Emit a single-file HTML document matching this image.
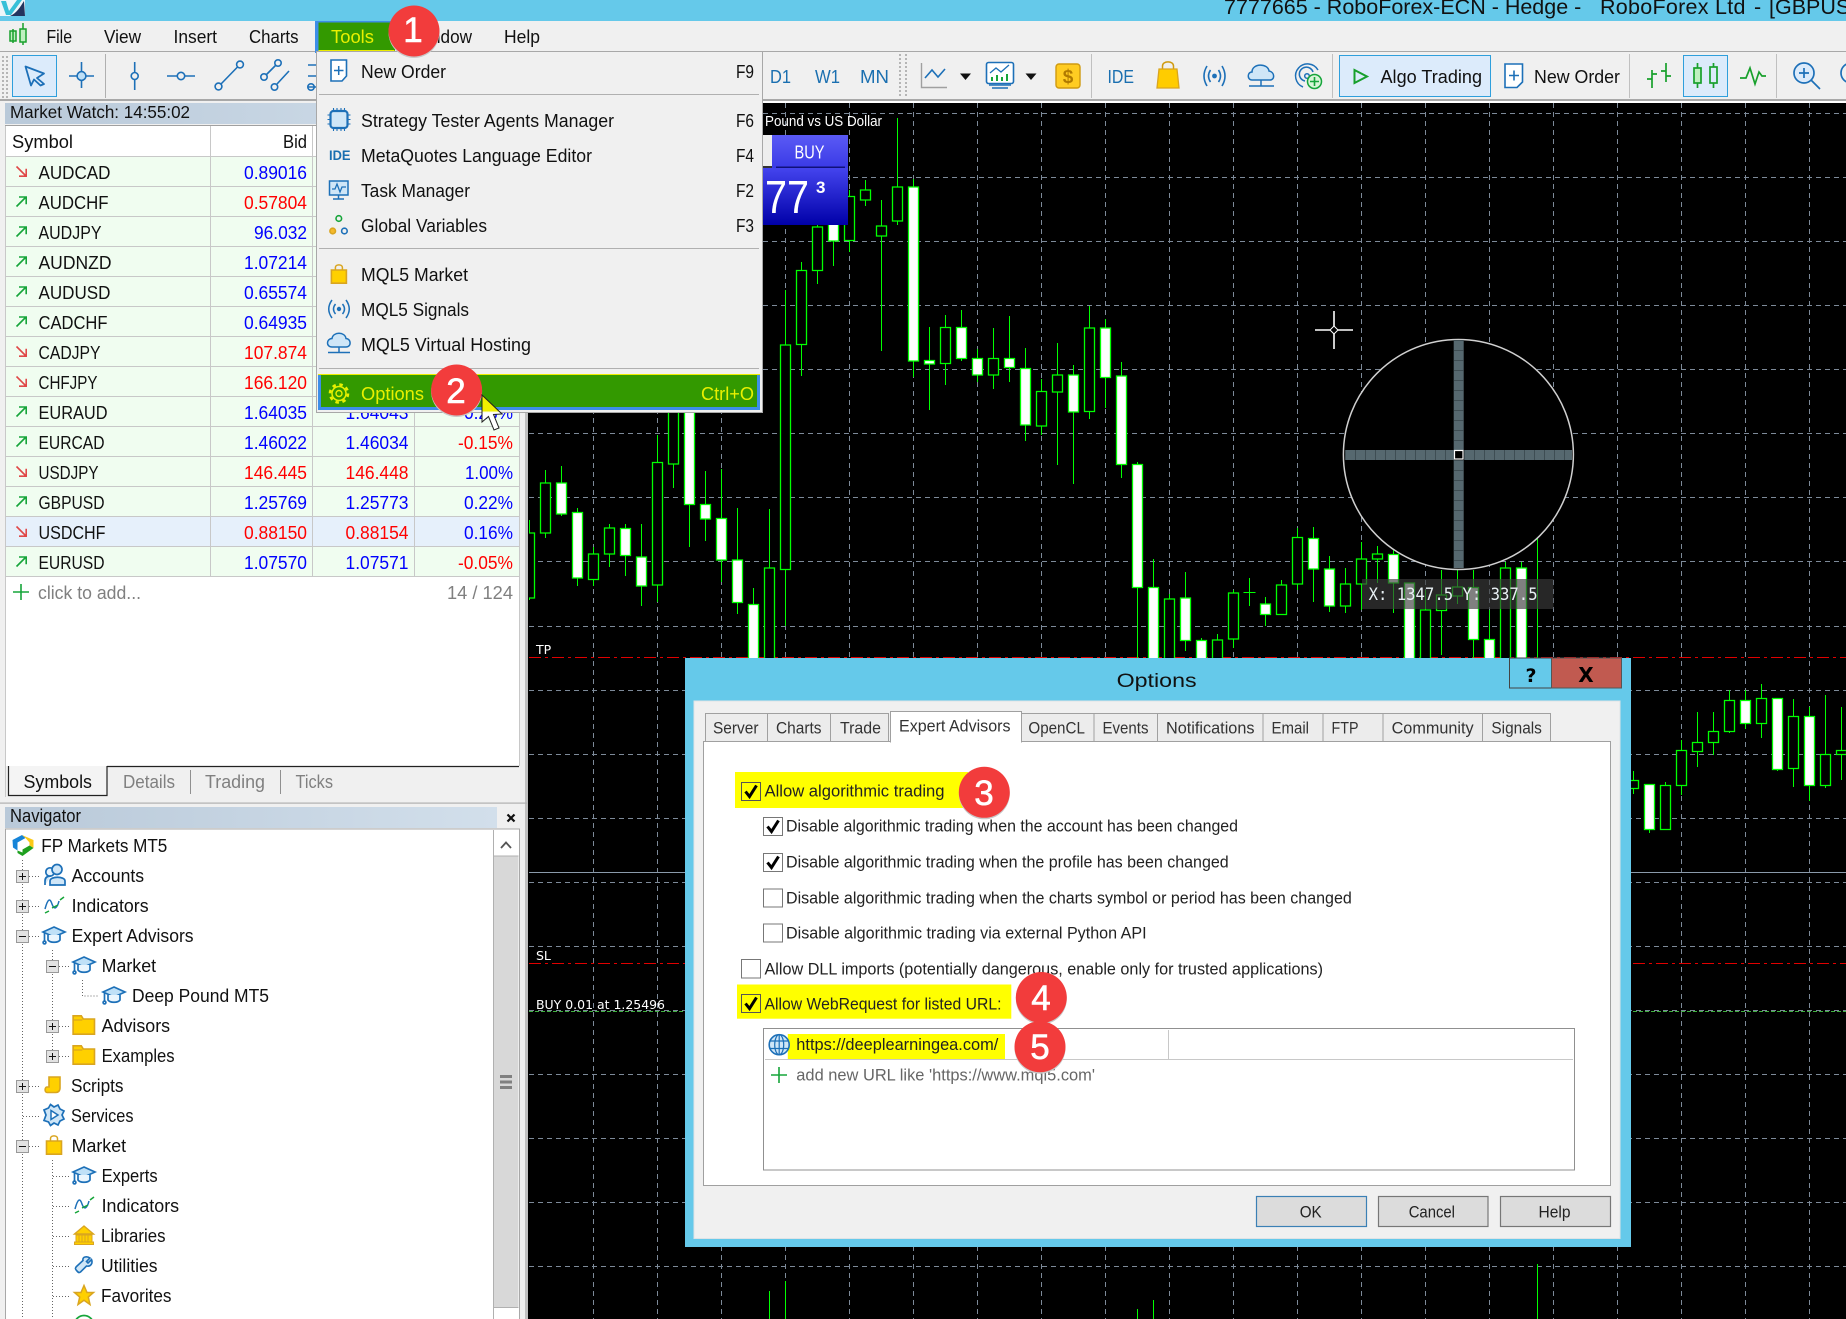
<!DOCTYPE html>
<html lang="en"><head><meta charset="utf-8"><title>MetaTrader 5 Options</title>
<style>
html,body{margin:0;padding:0;background:#000;width:1846px;height:1319px;overflow:hidden}
svg{display:block}
text{font-family:"Liberation Sans",sans-serif;fill:#111;font-size:18.5px;white-space:pre}
.g{fill:#808080}.b{fill:#0000ff}.r{fill:#ff0000}.h{fill:#1a6fb0}
.d{font-size:16.5px;fill:#222}.tb{font-size:16.5px;fill:#333}
.y{fill:#e8f000}
.w{fill:#fff}
.n{font-size:35px;fill:#fff;stroke:#fff;stroke-width:.6;text-anchor:middle}
</style></head><body>
<svg xmlns="http://www.w3.org/2000/svg" width="1846" height="1319" viewBox="0 0 1846 1319">
<defs>
<clipPath id="cc"><rect x="529" y="103" width="1317" height="1216"/></clipPath>
<clipPath id="tc"><rect x="0" y="0" width="1846" height="21"/></clipPath>
<linearGradient id="hd" x1="0" x2="1" y1="0" y2="0"><stop offset="0" stop-color="#b9c9d9"/><stop offset="1" stop-color="#d2dfeb"/></linearGradient>
<linearGradient id="bu" x1="0" x2="0" y1="0" y2="1"><stop offset="0" stop-color="#5a5af5"/><stop offset="1" stop-color="#3a3ae6"/></linearGradient>
<linearGradient id="bd" x1="0" x2="0" y1="0" y2="1"><stop offset="0" stop-color="#4444ee"/><stop offset="1" stop-color="#0000a8"/></linearGradient>
<linearGradient id="cu" x1="0" x2="0" y1="0" y2="1"><stop offset=".45" stop-color="#f0f000"/><stop offset=".5" stop-color="#fff"/></linearGradient>
<g id="up"><path d="M1 10.5L10.5 1M3.5 1H10.7V8.2" fill="none" stroke="#16a53a" stroke-width="1.6"/></g>
<g id="dn"><path d="M1 .5L10.5 10M10.7 2.8V10.2H3.5" fill="none" stroke="#e04848" stroke-width="1.6"/></g>
<g id="cap" fill="none" stroke="#1d70b8" stroke-width="1.7"><path d="M12 1L23 6L12 11L1 6Z" fill="#bfe0f7"/><path d="M6 9V14C8 17 16 17 18 14V9" fill="#eaf5fd"/><path d="M2.5 7V15"/><circle cx="2.5" cy="16.5" r="1.4"/></g>
<g id="fol"><path d="M.8 19.2V.8H9L11 4H22.2V19.2Z" fill="#ffd000" stroke="#d9a520" stroke-width="1.6"/><path d="M1 5H10" stroke="#d9a520" stroke-width="1.2"/></g>
<g id="bag"><path d="M5 6V3.5C5 0 12 0 12 3.5V6" fill="none" stroke="#d9a520" stroke-width="1.5"/><path d="M1 6H16V19.2H1Z" fill="#ffd000" stroke="#d9a520" stroke-width="1.6"/></g>
<g id="ind" fill="none" stroke-width="1.5"><path d="M1 13C4 2 6 2 8 8S13 13 15 5" stroke="#1d70b8"/><path d="M1 17L5 15M8 12L14 9M16 4L20 1" stroke="#16a53a"/></g>
<g id="pl"><rect x=".5" y=".5" width="12" height="12" fill="#e2e2e2" stroke="#999"/><path d="M3 6.5H10M6.5 3V10" stroke="#111"/></g>
<g id="mi"><rect x=".5" y=".5" width="12" height="12" fill="#e2e2e2" stroke="#999"/><path d="M3 6.5H10" stroke="#111"/></g>
<g id="ck"><path d="M4 9L8 14L15 3" fill="none" stroke="#000" stroke-width="3"/></g>
</defs>

<!-- chart -->
<rect x="0" y="0" width="1846" height="1319" fill="#000"/>
<g clip-path="url(#cc)">
<path fill="none" stroke="#7d8a99" stroke-dasharray="5 4" d="M529 113.5H1846M529 177.5H1846M529 241.5H1846M529 305.5H1846M529 369.5H1846M529 433.5H1846M529 497.5H1846M529 561.5H1846M529 626.5H1846M529 690.5H1846M529 754.5H1846M529 818.5H1846M529 882.5H1846M529 946.5H1846M529 1010.5H1846M529 1074.5H1846M529 1138.5H1846M529 1202.5H1846M529 1266.5H1846"/>
<path fill="none" stroke="#7d8a99" stroke-dasharray="5 4" d="M593.5 103V1319M657.5 103V1319M721.5 103V1319M785.5 103V1319M849.5 103V1319M913.5 103V1319M977.5 103V1319M1041.5 103V1319M1105.5 103V1319M1169.5 103V1319M1233.5 103V1319M1297.5 103V1319M1361.5 103V1319M1425.5 103V1319M1489.5 103V1319M1553.5 103V1319M1617.5 103V1319M1681.5 103V1319M1745.5 103V1319M1809.5 103V1319"/>
<path fill="none" stroke="#8a9aaa" d="M529 872.5H1846"/>
<path fill="none" stroke="#e00000" stroke-dasharray="12 4 3 4" d="M529 657.5H1846M529 963.5H1846"/>
<path fill="none" stroke="#3faf3f" stroke-dasharray="4 2" d="M529 1011.5H1846"/>
<!-- wicks -->
<path fill="none" stroke="#00ff00" d="M529.5 520V600M545.5 470V538M561.5 466V516M577.5 508V586M593.5 547V586M609.5 524V567M625.5 524V576M641.5 524V606M657.5 435V602M673.5 400V488M689.5 400V547M705.5 471V541M721.5 469V582M737.5 508V614M753.5 588V660M769.5 509V660M785.5 290V626M801.5 262V376M817.5 220V284M833.5 220V266M849.5 190V252M865.5 180V206M881.5 200V351M897.5 118V225M913.5 179V377M929.5 327V410M945.5 315V385M961.5 310V361M977.5 349V382M993.5 328V389M1009.5 316V382M1025.5 348V441M1041.5 379V435M1057.5 343V465M1073.5 365V484M1089.5 306V419M1105.5 319V408M1121.5 362V478M1137.5 462V660M1153.5 559V660M1169.5 594V660M1185.5 572V651M1201.5 638V660M1217.5 634V660M1233.5 590V648M1249.5 578V606M1243.5 592.5H1255.5M1265.5 597V626M1281.5 580V615M1297.5 528V590M1313.5 527V602M1329.5 556V612M1345.5 568V613M1361.5 542V610M1377.5 546V583M1393.5 550V613M1409.5 583V660M1425.5 590V660M1441.5 570V655M1457.5 570V604M1473.5 570V660M1489.5 610V660M1505.5 562V660M1521.5 562V660M1537.5 538V660M769.5 1291V1319M785.5 1281V1319M1137.5 1309V1319M1153.5 1300V1319M1537.5 1264V1319M1633.5 771V794M1649.5 784V833M1665.5 782V829M1681.5 740V795M1697.5 712V767M1713.5 712V755M1729.5 690V733M1745.5 690V729M1761.5 684V738M1777.5 698V771M1793.5 699V787M1809.5 707V801M1825.5 695V788M1841.5 707V780"/>
<!-- hollow bodies -->
<path fill="#000" stroke="#00ff00" stroke-width="1.3" d="M524.5 533H534.5V598H524.5zM540.5 483H550.5V533H540.5zM588.5 554H598.5V579.5H588.5zM604.5 528H614.5V554H604.5zM652.5 462.5H662.5V585H652.5zM668.5 400H678.5V464H668.5zM764.5 568H774.5V660H764.5zM780.5 345H790.5V569.5H780.5zM796.5 270.5H806.5V344.5H796.5zM812.5 227H822.5V270.5H812.5zM844.5 196.5H854.5V240.5H844.5zM860.5 190H870.5V200H860.5zM876.5 226H886.5V236H876.5zM892.5 187H902.5V221H892.5zM940.5 327.5H950.5V363.5H940.5zM988.5 358.5H998.5V375H988.5zM1036.5 391.5H1046.5V426H1036.5zM1052.5 375H1062.5V392H1052.5zM1084.5 328H1094.5V411.5H1084.5zM1164.5 599H1174.5V660H1164.5zM1212.5 640H1222.5V660H1212.5zM1228.5 593H1238.5V639H1228.5zM1276.5 585H1286.5V614.5H1276.5zM1292.5 537.5H1302.5V584H1292.5zM1340.5 584H1350.5V606H1340.5zM1356.5 559H1366.5V584H1356.5zM1372.5 554H1382.5V559H1372.5zM1420.5 610H1430.5V660H1420.5zM1436.5 595H1446.5V610.5H1436.5zM1452.5 587H1462.5V596H1452.5zM1500.5 568H1510.5V660H1500.5zM1628.5 780.5H1638.5V788.5H1628.5zM1660.5 785.5H1670.5V829.5H1660.5zM1676.5 750.5H1686.5V785.5H1676.5zM1692.5 742.5H1702.5V751.5H1692.5zM1708.5 731.5H1718.5V742.5H1708.5zM1724.5 700.5H1734.5V731.5H1724.5zM1756.5 698.5H1766.5V723.5H1756.5zM1788.5 716.5H1798.5V768.5H1788.5zM1820.5 754.5H1830.5V785.5H1820.5zM1836.5 750.5H1846.5V754.5H1836.5z"/>
<!-- white bodies -->
<path fill="#fff" stroke="#00ff00" stroke-width="1.3" d="M556.5 483H566.5V514H556.5zM572.5 512.5H582.5V578H572.5zM620.5 528.5H630.5V555.5H620.5zM636.5 557H646.5V586H636.5zM684.5 400H694.5V504.5H684.5zM700.5 504.5H710.5V519H700.5zM716.5 518.5H726.5V560H716.5zM732.5 560H742.5V602.5H732.5zM748.5 604.5H758.5V660H748.5zM828.5 200H838.5V241H828.5zM908.5 187H918.5V361H908.5zM924.5 360.5H934.5V364H924.5zM956.5 327.5H966.5V358.5H956.5zM972.5 358.5H982.5V375H972.5zM1004.5 358.5H1014.5V367.5H1004.5zM1020.5 368.5H1030.5V425H1020.5zM1068.5 375H1078.5V412H1068.5zM1100.5 328H1110.5V377.5H1100.5zM1116.5 376H1126.5V464.5H1116.5zM1132.5 464.5H1142.5V587.5H1132.5zM1148.5 587.5H1158.5V660H1148.5zM1180.5 598H1190.5V640.5H1180.5zM1196.5 640.5H1206.5V660H1196.5zM1260.5 604H1270.5V614.5H1260.5zM1308.5 538.5H1318.5V569H1308.5zM1324.5 569H1334.5V606H1324.5zM1388.5 554.5H1398.5V583H1388.5zM1404.5 583H1414.5V660H1404.5zM1468.5 587.5H1478.5V639.5H1468.5zM1484.5 639.5H1494.5V660H1484.5zM1516.5 568H1526.5V660H1516.5zM1644.5 784.5H1654.5V829.5H1644.5zM1740.5 700.5H1750.5V723.5H1740.5zM1772.5 698.5H1782.5V769.5H1772.5zM1804.5 716.5H1814.5V785.5H1804.5z"/>
</g>
<rect x="529" y="101" width="1317" height="2" fill="#fff"/>
<text class="w" x="765" y="126" style="font-size:14.5px" textLength="117" lengthAdjust="spacingAndGlyphs">Pound vs US Dollar</text>
<text class="w" x="536" y="654" style="font-family:'DejaVu Sans',sans-serif;font-size:12.5px">TP</text>
<text class="w" x="536" y="960" style="font-family:'DejaVu Sans',sans-serif;font-size:12.5px">SL</text>
<text class="w" x="536" y="1009" style="font-family:'DejaVu Sans',sans-serif;font-size:12.5px" textLength="129" lengthAdjust="spacingAndGlyphs">BUY 0.01 at 1.25496</text>
<!-- buy panel -->
<rect x="763" y="135" width="9" height="32" fill="#eee"/><rect x="763" y="166" width="9" height="2" fill="#333"/>
<rect x="772" y="135" width="76" height="33" fill="url(#bu)"/>
<rect x="763" y="168" width="85" height="57" fill="url(#bd)"/>
<rect x="776" y="166.5" width="69" height="1.5" fill="#10107a"/>
<text class="w" x="794.5" y="158.5" textLength="30" lengthAdjust="spacingAndGlyphs">BUY</text>
<text class="w" x="765" y="213" style="font-size:46px" textLength="44" lengthAdjust="spacingAndGlyphs">77</text>
<text class="w" x="816" y="193" style="font-size:17px;font-weight:bold">3</text>
<!-- small crosshair -->
<path d="M1315 330H1330M1338 330H1353M1334 311V326M1334 334V349" stroke="#fff" stroke-width="1.6" fill="none"/>
<path d="M1334 326L1338 330L1334 334L1330 330Z" fill="#000" stroke="#fff"/>
<!-- loupe -->
<circle cx="1458.4" cy="454.5" r="115" fill="#000" stroke="#d0d0d0" stroke-width="1.5"/>
<path d="M1458.7 340V450M1458.7 460V568" stroke="#56686f" stroke-width="10" fill="none"/>
<path d="M1345 455H1454M1464 455H1572" stroke="#56686f" stroke-width="10" fill="none"/>
<path d="M1458.7 340V450M1458.7 460V568" stroke="#3e4d53" stroke-width="10" stroke-dasharray="1 9" fill="none"/>
<path d="M1345 455H1454M1464 455H1572" stroke="#3e4d53" stroke-width="10" stroke-dasharray="1 9" fill="none"/>
<rect x="1454.5" y="450.5" width="8.5" height="8.5" fill="#000" stroke="#fff" stroke-width="1.2"/>
<rect x="1362" y="579" width="191.5" height="30" fill="#3c3c3c" fill-opacity=".65"/>
<text x="1368.6" y="600" style="font-family:'DejaVu Sans Mono',monospace;font-size:17px;fill:#e8f0f4" textLength="169" lengthAdjust="spacingAndGlyphs">X: 1347.5 Y: 337.5</text>

<!-- title bar -->
<rect x="0" y="0" width="1846" height="21" fill="#65c9ea"/>
<g clip-path="url(#tc)"><text x="1224" y="14" style="font-size:21.5px">7777665 - RoboForex-ECN - Hedge -</text><text x="1600" y="14" style="font-size:21.5px" textLength="145.5" lengthAdjust="spacing">RoboForex Ltd</text><text x="1754" y="14" style="font-size:21.5px">-</text><text x="1769" y="14" style="font-size:21.5px">[GBPUSD,H1]</text></g>
<rect x="0" y="0" width="25" height="16" fill="#eef6f9"/>
<path d="M1 1L6 15H11L22 0H17L9 11L6 1Z" fill="#37c0d8"/><path d="M10 16C17 13 20 7 24 1L25 16Z" fill="#24345e"/>

<!-- menu bar + toolbar -->
<rect x="0" y="21" width="1846" height="80" fill="#f0f0f0"/>
<rect x="0" y="51" width="1846" height="1" fill="#a8a8a8"/>
<rect x="0" y="99" width="1846" height="2" fill="#a8a8a8"/>
<g fill="none" stroke="#18a02c" stroke-width="1.5"><rect x="10" y="31" width="6" height="10" fill="#bff0c0"/><path d="M13 29V43M23 23V45"/><rect x="20" y="29" width="6" height="13" fill="#bff0c0"/></g>
<text x="46.5" y="43" textLength="25.5" lengthAdjust="spacingAndGlyphs">File</text>
<text x="104" y="43" textLength="37" lengthAdjust="spacingAndGlyphs">View</text>
<text x="173.5" y="43" textLength="43.5" lengthAdjust="spacingAndGlyphs">Insert</text>
<text x="249" y="43" textLength="49.5" lengthAdjust="spacingAndGlyphs">Charts</text>
<text x="411" y="43" textLength="61" lengthAdjust="spacingAndGlyphs">Window</text>
<text x="504" y="43" textLength="36" lengthAdjust="spacingAndGlyphs">Help</text>

<!-- left toolbar -->
<path d="M3 56V98M7 56V98" stroke="#b5b5b5" stroke-width="2" stroke-dasharray="2 2" fill="none"/>
<rect x="12.5" y="55.5" width="44" height="41" fill="#dcebfb" stroke="#2f9fdc"/>
<path d="M25.5 66.5L44 73.5L37 78L44 84L40.5 85.5L34 79.5L31 85.5Z" fill="none" stroke="#1d70b8" stroke-width="1.8" stroke-linejoin="round"/>
<g fill="none" stroke="#1d70b8" stroke-width="1.6"><path d="M69 76H77M86 76H94M81.5 62V71M81.5 81V88"/><circle cx="81.5" cy="76" r="4.4" fill="#bfe0f7"/>
<path d="M105.5 54V98" stroke="#b0b0b0" stroke-width="1"/>
<path d="M134.7 62V72M134.7 80V90"/><circle cx="134.7" cy="76" r="3.5"/>
<path d="M167 76H177M185 76H195"/><circle cx="181" cy="76" r="3.7"/>
<path d="M221 84L237.5 67"/><circle cx="218.5" cy="86.5" r="3.4"/><circle cx="240" cy="64.5" r="3.4"/>
<path d="M266 75L276 65M277 84L289 71"/><circle cx="264" cy="77" r="3.2"/><circle cx="278" cy="63" r="3.2"/><circle cx="274.5" cy="87" r="3.2"/>
<path d="M308 65H316M308 76H316M308 87H316"/><circle cx="311" cy="87" r="3.2"/></g>

<!-- right toolbar -->
<path d="M900 54V98M906 54V98" stroke="#b5b5b5" stroke-width="2" stroke-dasharray="2 2" fill="none"/>
<text class="h" x="770" y="83" textLength="21" lengthAdjust="spacingAndGlyphs">D1</text>
<text class="h" x="815" y="83" textLength="25" lengthAdjust="spacingAndGlyphs">W1</text>
<text class="h" x="860" y="83" textLength="29" lengthAdjust="spacingAndGlyphs">MN</text>
<path d="M921.5 63V87.5H947" fill="none" stroke="#a0a0a0" stroke-width="1.4"/>
<path d="M925 78L932 70L938 77L945 69" fill="none" stroke="#1d70b8" stroke-width="1.6"/>
<path d="M960 73.5H971L965.5 80Z" fill="#111"/>
<rect x="986.5" y="62.5" width="27" height="21" rx="2" fill="#fff" stroke="#1d70b8" stroke-width="1.6"/>
<path d="M989 85H1011M992 88H1008" stroke="#1d70b8" stroke-width="1.4"/>
<path d="M990 73L996 68L1001 72L1009 65" fill="none" stroke="#1d70b8" stroke-width="1.3"/>
<path d="M992 81V77M997 81V75M1002 81V77M1007 81V74" stroke="#16a53a" stroke-width="2"/>
<path d="M1025.5 73.5H1036.5L1031 80Z" fill="#111"/>
<rect x="1056" y="64" width="24" height="24" rx="3" fill="#ffcc22" stroke="#cf9a10" stroke-width="1.4"/>
<text x="1068" y="83" style="font-size:19px;font-weight:bold;fill:#b07a00;text-anchor:middle">$</text>
<path d="M1091.5 54V98M1332.5 54V98M1629.5 54V98M1776.5 54V98" stroke="#c0c0c0"/>
<text class="h" x="1107.5" y="83" textLength="26.5" lengthAdjust="spacingAndGlyphs">IDE</text>
<path d="M1162.5 69V66C1162.5 60.5 1173.5 60.5 1173.5 66V69" fill="none" stroke="#cf9a10" stroke-width="1.5"/>
<path d="M1159 69H1177L1179 88H1157Z" fill="#ffcc00" stroke="#d9a520" stroke-width="1.3"/>
<g fill="none" stroke="#1d70b8" stroke-width="1.6"><path d="M1207 66Q1201 76 1207 86M1222 66Q1228 76 1222 86M1210.5 70Q1206.5 76 1210.5 82M1218.5 70Q1222.5 76 1218.5 82"/></g><circle cx="1214.5" cy="76" r="2.4" fill="#1d70b8"/>
<path d="M1252 80C1247 80 1247 72 1252 72C1252 63 1268 63 1269 71C1275 72 1275 80 1270 80Z" fill="#cfe6f7" stroke="#1d70b8" stroke-width="1.5"/>
<path d="M1261 80V86M1249 86H1274" stroke="#1d70b8" stroke-width="1.5"/>
<g fill="none" stroke="#1d70b8" stroke-width="1.5"><path d="M1303 87A12 12 0 1 1 1318 70"/><path d="M1305 81A7 7 0 1 1 1313 72"/><circle cx="1307" cy="76" r="2.3"/></g>
<circle cx="1314.5" cy="81.5" r="7" fill="#d8f5d8" stroke="#16a53a" stroke-width="1.5"/><path d="M1310 81.5H1319M1314.5 77V86" stroke="#16a53a" stroke-width="1.6"/>
<rect x="1339.5" y="55.5" width="151" height="41" fill="#dcebfb" stroke="#2f9fdc"/>
<path d="M1354.5 70L1367 76.5L1354.5 83Z" fill="none" stroke="#18a02c" stroke-width="2"/>
<text x="1380.5" y="83" textLength="101.5" lengthAdjust="spacingAndGlyphs">Algo Trading</text>
<path d="M1505 64H1522.5V82L1517 87.5H1505Z" fill="#fff" stroke="#1d70b8" stroke-width="1.6"/><path d="M1509 75.5H1519M1514 70.5V80.5" stroke="#1d70b8" stroke-width="1.6"/>
<text x="1534" y="83" textLength="86" lengthAdjust="spacingAndGlyphs">New Order</text>
<path d="M1652 70V88M1647 79H1652M1652 74H1657M1666 63V82M1661 71H1666M1666 76H1671" stroke="#18a02c" stroke-width="1.7" fill="none"/>
<rect x="1683.5" y="55.5" width="44" height="41" fill="#dcebfb" stroke="#2f9fdc"/>
<g stroke="#18a02c" stroke-width="1.7" fill="none"><path d="M1697.5 63V88M1713.5 63V88"/><rect x="1694" y="68" width="7" height="15" fill="#bff0c0"/><rect x="1710" y="67" width="7" height="16" fill="#dcebfb"/></g>
<path d="M1740 78L1746 78L1750 68L1755 84L1759 72L1762 76L1766 76" fill="none" stroke="#18a02c" stroke-width="1.7"/>
<g fill="none" stroke="#1d70b8" stroke-width="1.7"><circle cx="1804" cy="73" r="10" fill="#dcebfb"/><path d="M1811 80L1820 89M1799 73H1809M1804 68V78"/><circle cx="1851" cy="73" r="10"/></g>

<!-- left panel -->
<rect x="0" y="101" width="527" height="1218" fill="#f0f0f0"/>
<rect x="525" y="101" width="3" height="1218" fill="#c0c0c0"/>
<rect x="5" y="103" width="514" height="21" fill="url(#hd)"/>
<text x="10" y="118" style="font-size:17.5px" textLength="180" lengthAdjust="spacingAndGlyphs">Market Watch: 14:55:02</text>
<rect x="5" y="125" width="514" height="1" fill="#a0a0a0"/>
<rect x="5.5" y="126" width="514" height="640" fill="#fff"/>
<text x="12" y="148" textLength="61" lengthAdjust="spacingAndGlyphs">Symbol</text>
<text x="307" y="148" text-anchor="end" textLength="24" lengthAdjust="spacingAndGlyphs">Bid</text>
<!-- rows -->
<rect x="5.5" y="156" width="514" height="420" fill="#f0fdf0"/>
<rect x="5.5" y="516" width="514" height="30" fill="#e6f0fb"/>
<path fill="none" stroke="#c8c8c8" d="M5.5 156.5H519.5M5.5 186.5H519.5M5.5 216.5H519.5M5.5 246.5H519.5M5.5 276.5H519.5M5.5 306.5H519.5M5.5 336.5H519.5M5.5 366.5H519.5M5.5 396.5H519.5M5.5 426.5H519.5M5.5 456.5H519.5M5.5 486.5H519.5M5.5 516.5H519.5M5.5 546.5H519.5M5.5 576.5H519.5M210.5 126V576M312.5 126V576M414.5 156V576M5.5 126V797M519.5 126V766"/>
<use href="#dn" x="15.5" y="166"/><text x="38.5" y="179" textLength="72" lengthAdjust="spacingAndGlyphs">AUDCAD</text><text class="b" x="307" y="179" text-anchor="end" textLength="63" lengthAdjust="spacingAndGlyphs">0.89016</text>
<use href="#up" x="15.5" y="196"/><text x="38.5" y="209" textLength="70" lengthAdjust="spacingAndGlyphs">AUDCHF</text><text class="r" x="307" y="209" text-anchor="end" textLength="63" lengthAdjust="spacingAndGlyphs">0.57804</text>
<use href="#up" x="15.5" y="226"/><text x="38.5" y="239" textLength="63" lengthAdjust="spacingAndGlyphs">AUDJPY</text><text class="b" x="307" y="239" text-anchor="end" textLength="53" lengthAdjust="spacingAndGlyphs">96.032</text>
<use href="#up" x="15.5" y="256"/><text x="38.5" y="269" textLength="73" lengthAdjust="spacingAndGlyphs">AUDNZD</text><text class="b" x="307" y="269" text-anchor="end" textLength="63" lengthAdjust="spacingAndGlyphs">1.07214</text>
<use href="#up" x="15.5" y="286"/><text x="38.5" y="299" textLength="72" lengthAdjust="spacingAndGlyphs">AUDUSD</text><text class="b" x="307" y="299" text-anchor="end" textLength="63" lengthAdjust="spacingAndGlyphs">0.65574</text>
<use href="#up" x="15.5" y="316"/><text x="38.5" y="329" textLength="69" lengthAdjust="spacingAndGlyphs">CADCHF</text><text class="b" x="307" y="329" text-anchor="end" textLength="63" lengthAdjust="spacingAndGlyphs">0.64935</text>
<use href="#dn" x="15.5" y="346"/><text x="38.5" y="359" textLength="62" lengthAdjust="spacingAndGlyphs">CADJPY</text><text class="r" x="307" y="359" text-anchor="end" textLength="63" lengthAdjust="spacingAndGlyphs">107.874</text>
<use href="#dn" x="15.5" y="376"/><text x="38.5" y="389" textLength="59" lengthAdjust="spacingAndGlyphs">CHFJPY</text><text class="r" x="307" y="389" text-anchor="end" textLength="63" lengthAdjust="spacingAndGlyphs">166.120</text>
<use href="#up" x="15.5" y="406"/><text x="38.5" y="419" textLength="69" lengthAdjust="spacingAndGlyphs">EURAUD</text><text class="b" x="307" y="419" text-anchor="end" textLength="63" lengthAdjust="spacingAndGlyphs">1.64035</text><text class="b" x="408.5" y="419" text-anchor="end" textLength="63" lengthAdjust="spacingAndGlyphs">1.64043</text><text class="b" x="513" y="419" text-anchor="end" textLength="49" lengthAdjust="spacingAndGlyphs">0.23%</text>
<use href="#up" x="15.5" y="436"/><text x="38.5" y="449" textLength="66" lengthAdjust="spacingAndGlyphs">EURCAD</text><text class="b" x="307" y="449" text-anchor="end" textLength="63" lengthAdjust="spacingAndGlyphs">1.46022</text><text class="b" x="408.5" y="449" text-anchor="end" textLength="63" lengthAdjust="spacingAndGlyphs">1.46034</text><text class="r" x="513" y="449" text-anchor="end" textLength="55" lengthAdjust="spacingAndGlyphs">-0.15%</text>
<use href="#dn" x="15.5" y="466"/><text x="38.5" y="479" textLength="60" lengthAdjust="spacingAndGlyphs">USDJPY</text><text class="r" x="307" y="479" text-anchor="end" textLength="63" lengthAdjust="spacingAndGlyphs">146.445</text><text class="r" x="408.5" y="479" text-anchor="end" textLength="63" lengthAdjust="spacingAndGlyphs">146.448</text><text class="b" x="513" y="479" text-anchor="end" textLength="48" lengthAdjust="spacingAndGlyphs">1.00%</text>
<use href="#up" x="15.5" y="496"/><text x="38.5" y="509" textLength="66" lengthAdjust="spacingAndGlyphs">GBPUSD</text><text class="b" x="307" y="509" text-anchor="end" textLength="63" lengthAdjust="spacingAndGlyphs">1.25769</text><text class="b" x="408.5" y="509" text-anchor="end" textLength="63" lengthAdjust="spacingAndGlyphs">1.25773</text><text class="b" x="513" y="509" text-anchor="end" textLength="49" lengthAdjust="spacingAndGlyphs">0.22%</text>
<use href="#dn" x="15.5" y="526"/><text x="38.5" y="539" textLength="67" lengthAdjust="spacingAndGlyphs">USDCHF</text><text class="r" x="307" y="539" text-anchor="end" textLength="63" lengthAdjust="spacingAndGlyphs">0.88150</text><text class="r" x="408.5" y="539" text-anchor="end" textLength="63" lengthAdjust="spacingAndGlyphs">0.88154</text><text class="b" x="513" y="539" text-anchor="end" textLength="49" lengthAdjust="spacingAndGlyphs">0.16%</text>
<use href="#up" x="15.5" y="556"/><text x="38.5" y="569" textLength="66" lengthAdjust="spacingAndGlyphs">EURUSD</text><text class="b" x="307" y="569" text-anchor="end" textLength="63" lengthAdjust="spacingAndGlyphs">1.07570</text><text class="b" x="408.5" y="569" text-anchor="end" textLength="63" lengthAdjust="spacingAndGlyphs">1.07571</text><text class="r" x="513" y="569" text-anchor="end" textLength="55" lengthAdjust="spacingAndGlyphs">-0.05%</text>
<path d="M13 592H29M21 584V600" stroke="#16a53a" stroke-width="1.6"/>
<text class="g" x="38" y="599" textLength="103" lengthAdjust="spacingAndGlyphs">click to add...</text>
<text class="g" x="513" y="599" text-anchor="end" textLength="66" lengthAdjust="spacingAndGlyphs">14 / 124</text>
<!-- tabs -->
<rect x="6" y="767" width="513" height="31" fill="#f0f0f0"/>
<path d="M107 766.5H519" stroke="#222" stroke-width="1.2"/>
<path d="M8.5 766V795.5H107V766" fill="#f4f4f4" stroke="#222" stroke-width="1.2"/>
<text x="23.5" y="788" textLength="68.5" lengthAdjust="spacingAndGlyphs">Symbols</text>
<text class="g" x="123" y="788" textLength="52" lengthAdjust="spacingAndGlyphs">Details</text>
<text class="g" x="205" y="788" textLength="60" lengthAdjust="spacingAndGlyphs">Trading</text>
<text class="g" x="295.5" y="788" textLength="37.5" lengthAdjust="spacingAndGlyphs">Ticks</text>
<path d="M190.5 770V794M280.5 770V794" stroke="#909090"/>
<rect x="0" y="802.5" width="527" height="1.2" fill="#b0b0b0"/>
<!-- navigator -->
<rect x="5" y="807" width="492" height="21" fill="url(#hd)"/>
<text x="10" y="822" textLength="71" lengthAdjust="spacingAndGlyphs">Navigator</text>
<path d="M507.5 814.5L514.5 821.5M514.5 814.5L507.5 821.5" stroke="#111" stroke-width="2.2"/>
<rect x="5.5" y="829" width="514" height="495" fill="#fff" stroke="#a8a8a8"/>
<rect x="493.5" y="856" width="25" height="451" fill="#d8d8d8"/>
<path d="M493.5 830V1319M493.5 856H518.5M493.5 1307.5H518.5" stroke="#b0b0b0" fill="none"/>
<path d="M501 848L506 842.5L511 848" fill="none" stroke="#555" stroke-width="1.8"/>
<path d="M500 1076.5H512M500 1082H512M500 1087.5H512" stroke="#808080" stroke-width="3"/>
<path fill="none" stroke="#666" stroke-dasharray="1 2" d="M22.5 860V1319M52.5 950V1050M52.5 1160V1319M82.5 980V996H99M29 876.5H39M29 906.5H39M29 936.5H39M59 966.5H69M59 1026.5H69M59 1056.5H69M29 1086.5H39M23 1116.5H39M29 1146.5H39M53 1176.5H69M53 1206.5H69M53 1236.5H69M53 1266.5H69M53 1296.5H69"/>
<use href="#pl" x="16" y="870"/><use href="#pl" x="16" y="900"/><use href="#mi" x="16" y="930"/><use href="#mi" x="46" y="960"/><use href="#pl" x="46" y="1020"/><use href="#pl" x="46" y="1050"/><use href="#pl" x="16" y="1080"/><use href="#mi" x="16" y="1140"/>
<!-- cube -->
<path d="M12.5 840L22 835L25.5 838L17.5 842.5V850.5L13 847.5Z" fill="#1684d8"/><path d="M22 835L33.5 840V848L29.5 845.5V842.5L25.5 838Z" fill="#fbc916"/><path d="M29.5 845.5L33.5 848L22.5 856L17.5 853V850.5L22.5 852.5V849.5Z" fill="#1ea01e"/>
<text x="41.3" y="852" textLength="126" lengthAdjust="spacingAndGlyphs">FP Markets MT5</text>
<g fill="#cfe6f7" stroke="#1d70b8" stroke-width="1.7"><circle cx="50" cy="872" r="4.2" fill="#eaf5fd"/><circle cx="57" cy="869.5" r="5"/><path d="M45 885V881C45 877 48 876 51 876M50 885V881C50 876 65 876 65 881V885Z"/></g>
<text x="71.6" y="882" textLength="72.5" lengthAdjust="spacingAndGlyphs">Accounts</text>
<use href="#ind" x="44" y="896"/><text x="71.6" y="912" textLength="77" lengthAdjust="spacingAndGlyphs">Indicators</text>
<use href="#cap" x="42" y="926"/><text x="71.6" y="942" textLength="122" lengthAdjust="spacingAndGlyphs">Expert Advisors</text>
<use href="#cap" x="72" y="956"/><text x="101.6" y="972" textLength="54.5" lengthAdjust="spacingAndGlyphs">Market</text>
<use href="#cap" x="102" y="986"/><text x="132" y="1002" textLength="137" lengthAdjust="spacingAndGlyphs">Deep Pound MT5</text>
<use href="#fol" x="72.3" y="1015"/><text x="101.6" y="1032" textLength="68.5" lengthAdjust="spacingAndGlyphs">Advisors</text>
<use href="#fol" x="72.3" y="1045"/><text x="101.6" y="1062" textLength="73" lengthAdjust="spacingAndGlyphs">Examples</text>
<path d="M49 1077H60V1088C60 1091 58 1092.5 56 1092.5H47C44.5 1092.5 44.5 1087 47 1087H49Z" fill="#ffd000" stroke="#d9a520" stroke-width="1.6"/>
<text x="71" y="1092" textLength="52.5" lengthAdjust="spacingAndGlyphs">Scripts</text>
<path d="M50.5 1104.5L54 1107L58 1105L60 1109L64 1111L62 1115L64 1119L60 1121L58 1125L54 1123L50.5 1125.5L48.5 1122L44 1120.5L46 1115L44 1110L48.5 1108Z" fill="#cfe6f7" stroke="#1d70b8" stroke-width="1.7"/><path d="M51 1110.5V1119.5L58 1115Z" fill="#fff" stroke="#1d70b8" stroke-width="1.5"/>
<text x="71" y="1122" textLength="62.5" lengthAdjust="spacingAndGlyphs">Services</text>
<use href="#bag" x="45.5" y="1135"/><text x="71.6" y="1152" textLength="54.5" lengthAdjust="spacingAndGlyphs">Market</text>
<use href="#cap" x="72" y="1166"/><text x="101.6" y="1182" textLength="56" lengthAdjust="spacingAndGlyphs">Experts</text>
<use href="#ind" x="74" y="1196"/><text x="101.6" y="1212" textLength="77.5" lengthAdjust="spacingAndGlyphs">Indicators</text>
<path d="M74.5 1234L84 1226L93.5 1234Z" fill="#ffd000" stroke="#d9a520" stroke-width="1.4"/><path d="M76 1235H92V1242H76Z" fill="#ffd000" stroke="#d9a520"/><path d="M79 1235V1242M82 1235V1242M85 1235V1242M88 1235V1242" stroke="#d9a520"/><rect x="74.5" y="1242" width="19" height="2.5" fill="#ffd000" stroke="#d9a520"/>
<text x="101" y="1242" textLength="64.5" lengthAdjust="spacingAndGlyphs">Libraries</text>
<path d="M77 1271C75 1269 75 1268 76.5 1266.5L83 1260.5C82 1256.5 87 1256 90 1258L86.5 1261.5L88 1263L91.5 1259.5C93 1263 91 1267 86.5 1266L80.5 1272C79 1273 78 1272.5 77 1271Z" fill="#cfe6f7" stroke="#1d70b8" stroke-width="1.6"/>
<text x="101" y="1272" textLength="56.5" lengthAdjust="spacingAndGlyphs">Utilities</text>
<path d="M84 1285.5L87 1292.5H93.5L88.3 1297L90 1304.5L84 1300.3L78 1304.5L79.7 1297L74.5 1292.5H81Z" fill="#ffd000" stroke="#d9a520" stroke-width="1.5"/>
<text x="101" y="1302" textLength="70.5" lengthAdjust="spacingAndGlyphs">Favorites</text>
<circle cx="84" cy="1325" r="9.5" fill="#fff" stroke="#16a53a" stroke-width="1.8"/>

<!-- Tools highlight + dropdown -->
<rect x="315" y="21" width="80" height="32" fill="#339900"/>
<rect x="315" y="21" width="3.5" height="32" fill="#3d8ee8"/><rect x="315" y="21" width="80" height="1.5" fill="#3d8ee8"/>
<rect x="318.5" y="50" width="76" height="3" fill="#ecec00"/>
<text class="y" x="331" y="43" textLength="43" lengthAdjust="spacingAndGlyphs">Tools</text>
<rect x="316.5" y="51.5" width="446" height="361" fill="#f0f0f0" stroke="#a8a8a8"/>
<path d="M319 94.5H759M319 248.5H759M319 368.5H759" stroke="#b0b0b0"/>
<path d="M331 60H346.5V76L342 81H331Z" fill="#fff" stroke="#1d70b8" stroke-width="1.6"/><path d="M334 70.5H343.5M338.7 66V75" stroke="#1d70b8" stroke-width="1.5"/>
<text x="361" y="78" textLength="85" lengthAdjust="spacingAndGlyphs">New Order</text><text x="754" y="78" text-anchor="end" textLength="18" lengthAdjust="spacingAndGlyphs">F9</text>
<rect x="330.5" y="111" width="17" height="17" rx="3" fill="#cfe6f7" stroke="#1d70b8" stroke-width="2.2"/><path d="M333.5 108V111M337 108V111M341 108V111M344.5 108V111M333.5 128V131M337 128V131M341 128V131M344.5 128V131M327.5 115H330.5M327.5 119.5H330.5M327.5 124H330.5M347.5 115H350.5M347.5 119.5H350.5M347.5 124H350.5" stroke="#1d70b8" stroke-width="1.1"/>
<text x="361" y="127" textLength="253" lengthAdjust="spacingAndGlyphs">Strategy Tester Agents Manager</text><text x="754" y="127" text-anchor="end" textLength="18" lengthAdjust="spacingAndGlyphs">F6</text>
<text x="329" y="160" class="h" style="font-size:14px;font-weight:bold" textLength="21.5" lengthAdjust="spacingAndGlyphs">IDE</text>
<text x="361" y="162" textLength="231" lengthAdjust="spacingAndGlyphs">MetaQuotes Language Editor</text><text x="754" y="162" text-anchor="end" textLength="18" lengthAdjust="spacingAndGlyphs">F4</text>
<rect x="329.5" y="181" width="18.5" height="14" fill="#cfe6f7" stroke="#1d70b8" stroke-width="1.5"/><path d="M332 189H335L337 184L340 192L342 187H346" fill="none" stroke="#1d70b8" stroke-width="1.3"/><path d="M338.5 195V198.5M333 199H344" stroke="#1d70b8" stroke-width="1.5"/>
<text x="361" y="197" textLength="109" lengthAdjust="spacingAndGlyphs">Task Manager</text><text x="754" y="197" text-anchor="end" textLength="18" lengthAdjust="spacingAndGlyphs">F2</text>
<circle cx="338.8" cy="218.5" r="2.8" fill="none" stroke="#16a53a" stroke-width="1.6"/><circle cx="332.7" cy="231" r="2.8" fill="#f5b92b" stroke="#d9a520" stroke-width="1.6"/><circle cx="344.4" cy="231" r="2.8" fill="none" stroke="#1d70b8" stroke-width="1.6"/>
<text x="361" y="232" textLength="126" lengthAdjust="spacingAndGlyphs">Global Variables</text><text x="754" y="232" text-anchor="end" textLength="18" lengthAdjust="spacingAndGlyphs">F3</text>
<use href="#bag" x="330.4" y="264"/>
<text x="361" y="281" textLength="107" lengthAdjust="spacingAndGlyphs">MQL5 Market</text>
<g fill="none" stroke="#1d70b8" stroke-width="1.5"><path d="M332 300Q325.5 309 332 318M346 300Q352.5 309 346 318M335.5 304Q331.5 309 335.5 314M342.5 304Q346.5 309 342.5 314"/></g><circle cx="339" cy="309" r="2.2" fill="#1d70b8"/>
<text x="361" y="316" textLength="108" lengthAdjust="spacingAndGlyphs">MQL5 Signals</text>
<path d="M332 347C326 347 326 339 332 338.5C333 331.5 345 331.5 346 338.5C351.5 339 351.5 347 346 347Z" fill="#cfe6f7" stroke="#1d70b8" stroke-width="1.5"/><path d="M339 347V352M328 352.5H350" stroke="#1d70b8" stroke-width="1.5"/>
<text x="361" y="351" textLength="170" lengthAdjust="spacingAndGlyphs">MQL5 Virtual Hosting</text>
<rect x="318" y="374" width="442" height="36" fill="#3d8ee8"/>
<rect x="321" y="374" width="436" height="33" fill="#339900"/>
<rect x="318" y="374" width="442" height="1" fill="#ecec00"/>
<g fill="none" stroke="#e8f000"><circle cx="339" cy="393.5" r="9" stroke-width="2.6" stroke-dasharray="3.5 3.57"/><circle cx="339" cy="393.5" r="7" stroke-width="1.5"/><circle cx="339" cy="393.5" r="3" stroke-width="1.4"/></g>
<text class="y" x="361" y="400" textLength="63" lengthAdjust="spacingAndGlyphs">Options</text>
<text class="y" x="754" y="400" text-anchor="end" textLength="53" lengthAdjust="spacingAndGlyphs">Ctrl+O</text>

<!-- dialog -->
<rect x="685" y="658" width="946" height="589" fill="#65c9ea"/>
<rect x="694" y="701" width="926" height="537.5" fill="#f0f0f0" stroke="#dfe3e6"/>
<text x="1116.6" y="687" style="font-size:19.5px;fill:#111" textLength="80" lengthAdjust="spacingAndGlyphs">Options</text>
<rect x="1509.5" y="658" width="42" height="30" fill="#65c9ea" stroke="#444"/>
<rect x="1551.5" y="658" width="70" height="30" fill="#c15a50" stroke="#555"/>
<text x="1531" y="682" style="font-family:'DejaVu Sans',sans-serif;font-size:19px;font-weight:bold;text-anchor:middle;fill:#000">?</text>
<text x="1586" y="682" style="font-family:'DejaVu Sans',sans-serif;font-size:20px;font-weight:bold;text-anchor:middle;fill:#000">X</text>
<!-- panel & tabs -->
<rect x="703.5" y="741.5" width="907" height="444" fill="#fff" stroke="#a0a0a0"/>
<g fill="#ececec" stroke="#a0a0a0"><rect x="705.5" y="713.5" width="62" height="28"/><rect x="767.5" y="713.5" width="63" height="28"/><rect x="830.5" y="713.5" width="58" height="28"/><rect x="1021.5" y="713.5" width="72.5" height="28"/><rect x="1094" y="713.5" width="63.5" height="28"/><rect x="1157.5" y="713.5" width="105.5" height="28"/><rect x="1263" y="713.5" width="60" height="28"/><rect x="1323" y="713.5" width="60" height="28"/><rect x="1383" y="713.5" width="99.5" height="28"/><rect x="1482.5" y="713.5" width="68" height="28"/></g>
<path d="M890.5 742.5V711.5H1021.5V742.5" fill="#fff" stroke="#a0a0a0"/>
<rect x="891" y="740" width="130" height="4" fill="#fff"/>
<text class="tb" x="713" y="733.5" textLength="45.5" lengthAdjust="spacingAndGlyphs">Server</text>
<text class="tb" x="776" y="733.5" textLength="45.5" lengthAdjust="spacingAndGlyphs">Charts</text>
<text class="tb" x="840" y="733.5" textLength="41" lengthAdjust="spacingAndGlyphs">Trade</text>
<text class="tb" x="899" y="731.5" textLength="111.5" lengthAdjust="spacingAndGlyphs">Expert Advisors</text>
<text class="tb" x="1028.4" y="733.5" textLength="56.5" lengthAdjust="spacingAndGlyphs">OpenCL</text>
<text class="tb" x="1102.5" y="733.5" textLength="46" lengthAdjust="spacingAndGlyphs">Events</text>
<text class="tb" x="1166" y="733.5" textLength="88.5" lengthAdjust="spacingAndGlyphs">Notifications</text>
<text class="tb" x="1271.5" y="733.5" textLength="37.5" lengthAdjust="spacingAndGlyphs">Email</text>
<text class="tb" x="1331.5" y="733.5" textLength="27" lengthAdjust="spacingAndGlyphs">FTP</text>
<text class="tb" x="1391.6" y="733.5" textLength="82" lengthAdjust="spacingAndGlyphs">Community</text>
<text class="tb" x="1491.4" y="733.5" textLength="50.5" lengthAdjust="spacingAndGlyphs">Signals</text>
<!-- options -->
<rect x="735" y="772" width="233" height="36" fill="#ffff00"/>
<rect x="741.5" y="782.5" width="19" height="18" fill="none" stroke="#555"/><use href="#ck" x="741.5" y="782.5"/>
<text class="d" x="764.5" y="796.7" textLength="180" lengthAdjust="spacingAndGlyphs">Allow algorithmic trading</text>
<rect x="763.5" y="817.5" width="19" height="18" fill="#fff" stroke="#777"/><use href="#ck" x="763.5" y="817.5"/>
<text class="d" x="786" y="831.7" textLength="452" lengthAdjust="spacingAndGlyphs">Disable algorithmic trading when the account has been changed</text>
<rect x="763.5" y="853.5" width="19" height="18" fill="#fff" stroke="#777"/><use href="#ck" x="763.5" y="853.5"/>
<text class="d" x="786" y="867.7" textLength="442.7" lengthAdjust="spacingAndGlyphs">Disable algorithmic trading when the profile has been changed</text>
<rect x="763.5" y="889" width="19" height="18" fill="#fff" stroke="#777"/>
<text class="d" x="786" y="903.3" textLength="565.8" lengthAdjust="spacingAndGlyphs">Disable algorithmic trading when the charts symbol or period has been changed</text>
<rect x="763.5" y="924" width="19" height="18" fill="#fff" stroke="#777"/>
<text class="d" x="786" y="938.3" textLength="360.6" lengthAdjust="spacingAndGlyphs">Disable algorithmic trading via external Python API</text>
<rect x="741.5" y="959.5" width="19" height="18.5" fill="#fff" stroke="#777"/>
<text class="d" x="764.5" y="974.3" textLength="558.5" lengthAdjust="spacingAndGlyphs">Allow DLL imports (potentially dangerous, enable only for trusted applications)</text>
<rect x="737" y="984.5" width="274.3" height="34.2" fill="#ffff00"/>
<rect x="741.5" y="994.5" width="19" height="18" fill="none" stroke="#555"/><use href="#ck" x="741.5" y="994.5"/>
<text class="d" x="764.5" y="1009.3" textLength="237" lengthAdjust="spacingAndGlyphs">Allow WebRequest for listed URL:</text>
<!-- list -->
<rect x="763.5" y="1028.5" width="811" height="141.5" fill="#fff" stroke="#909090"/>
<path d="M765 1059.5H1573M1168.5 1030V1059" stroke="#c8c8c8"/>
<rect x="787.8" y="1034" width="217.2" height="25" fill="#ffff00"/>
<circle cx="779.2" cy="1044.7" r="10" fill="#cfe6f7" stroke="#1d70b8" stroke-width="1.6"/><ellipse cx="779.2" cy="1044.7" rx="4.5" ry="10" fill="none" stroke="#1d70b8" stroke-width="1.2"/><path d="M769.5 1041H789M769.5 1048.5H789M779.2 1034.7V1054.7" stroke="#1d70b8" stroke-width="1.2"/>
<text class="d" x="796.3" y="1050" textLength="202" lengthAdjust="spacingAndGlyphs">https://deeplearningea.com/</text>
<path d="M771 1075H787M779 1067V1083" stroke="#16a53a" stroke-width="1.6"/>
<text class="d" x="796.3" y="1080.7" style="fill:#666" textLength="298.7" lengthAdjust="spacingAndGlyphs">add new URL like 'https://www.mql5.com'</text>
<!-- buttons -->
<rect x="1256.5" y="1196.5" width="110" height="30" fill="#dcdcdc" stroke="#3b80b5" stroke-width="1.2"/>
<rect x="1378.5" y="1196.5" width="109.5" height="30" fill="#dcdcdc" stroke="#777" stroke-width="1.2"/>
<rect x="1500.5" y="1196.5" width="110" height="30" fill="#dcdcdc" stroke="#777" stroke-width="1.2"/>
<text class="d" x="1299.7" y="1217.3" textLength="22" lengthAdjust="spacingAndGlyphs">OK</text>
<text class="d" x="1408.7" y="1217.3" textLength="46.3" lengthAdjust="spacingAndGlyphs">Cancel</text>
<text class="d" x="1538.5" y="1217.3" textLength="32" lengthAdjust="spacingAndGlyphs">Help</text>

<!-- badges -->
<g fill="#c8c8c8"><circle cx="414" cy="32.5" r="25.5"/><circle cx="456.6" cy="391.5" r="25.5"/><circle cx="984.3" cy="793.8" r="25.5"/><circle cx="1041.3" cy="999" r="25.5"/><circle cx="1040" cy="1048.2" r="25.5"/></g>
<g fill="#f23c3c"><circle cx="414" cy="31" r="25.5"/><circle cx="456.6" cy="390" r="25.5"/><circle cx="984.3" cy="792.3" r="25.5"/><circle cx="1041.3" cy="997.5" r="25.5"/><circle cx="1040" cy="1046.7" r="25.5"/></g>
<text class="n" x="413" y="42">1</text>
<text class="n" x="456" y="403">2</text>
<text class="n" x="984" y="805">3</text>
<text class="n" x="1041" y="1010">4</text>
<text class="n" x="1040" y="1059">5</text>
<path d="M482 395L482 422L488.5 416.5L494 430L499 428L493.5 414.5L502 414Z" fill="url(#cu)" stroke="#222" stroke-width="1"/>
</svg>
</body></html>
